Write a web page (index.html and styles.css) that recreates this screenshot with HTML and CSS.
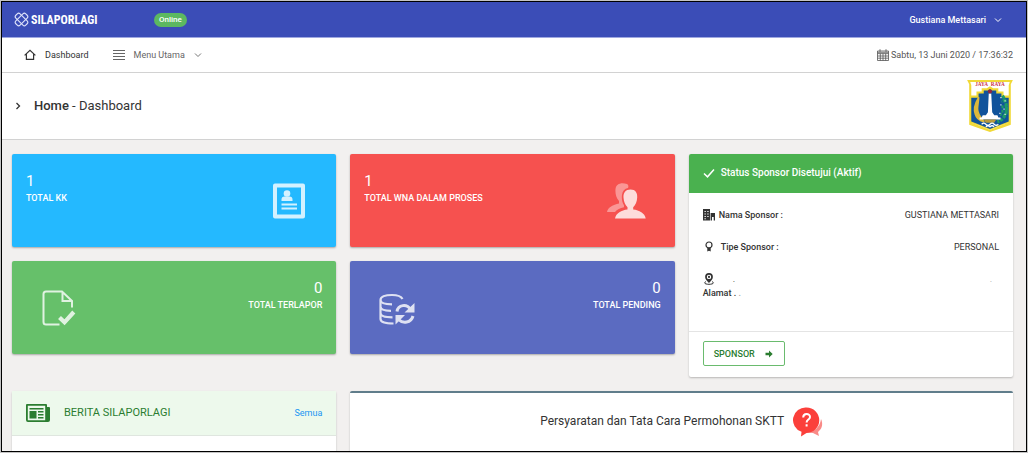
FILE: index.html
```html
<!DOCTYPE html>
<html lang="id">
<head>
<meta charset="utf-8">
<meta name="viewport" content="width=device-width, initial-scale=1">
<title>SILAPORLAGI - Dashboard</title>
<link rel="stylesheet" href="styles.css">
</head>
<body>
<div class="app">
  <header class="topbar">
    <a class="brand" href="#">
      <svg class="brand-mark" viewBox="0 0 30 30" aria-hidden="true">
        <g fill="none" stroke="currentColor" stroke-width="2.2">
          <rect x="1" y="9" width="28" height="12" rx="4" transform="rotate(45 15 15)"/>
          <rect x="1" y="9" width="28" height="12" rx="4" transform="rotate(-45 15 15)"/>
        </g>
      </svg>
      <span class="brand-name">SILAPORLAGI</span>
    </a>
    <span class="badge">Online</span>
    <button class="user" type="button">Gustiana Mettasari
      <svg class="caret" viewBox="0 0 8 8" aria-hidden="true"><path d="M1 2.5l3 3 3-3" fill="none" stroke="currentColor"/></svg>
    </button>
  </header>

  <nav class="menubar">
    <a class="menu-item active" href="#">
      <svg class="icon-12" viewBox="0 0 12 12" aria-hidden="true"><path d="M.6 6.4L6 1.4l5.4 5M2.4 5.2v5.2h7.2V5.2" fill="none" stroke="currentColor" stroke-width="1.2"/></svg>
      Dashboard
    </a>
    <button class="menu-item" type="button">
      <svg class="icon-12" viewBox="0 0 12 12" aria-hidden="true"><path d="M0 1.5h12M0 4.5h12M0 7.5h12M0 10.5h12" stroke="currentColor" stroke-width="1.2"/></svg>
      Menu Utama
      <svg class="caret" viewBox="0 0 8 8" aria-hidden="true"><path d="M1 2.5l3 3 3-3" fill="none" stroke="currentColor" stroke-width=".9"/></svg>
    </button>
    <time class="clock" datetime="2020-06-13T17:36:32">
      <svg class="icon-12" viewBox="0 0 12 12" aria-hidden="true"><path d="M.5 2h11v9.5H.5zM.5 4.600h11M.5 7h11M.5 9.200h11M3.300 4.600v7M6 4.600v7M8.700 4.600v7M3 .2v2.600M9 .2v2.600M.5 3.300h11" fill="none" stroke="currentColor" stroke-width=".8"/></svg>
      Sabtu, 13 Juni 2020 / 17:36:32
    </time>
  </nav>

  <div class="page-header">
    <svg class="caret dark" viewBox="0 0 8 8" aria-hidden="true"><path d="M2.5 1l3 3-3 3" fill="none" stroke="currentColor" stroke-width="1.3"/></svg>
    <h1 class="page-title"><strong>Home</strong> - Dashboard</h1>
    <svg class="crest" viewBox="1 1 44 50" role="img" aria-label="Jaya Raya">
      <path d="M1 1h44l-2 4v39l-8 3-12 4-12-4-8-3V5z" fill="#f1d936"/>
      <path d="M4 3h38l-1 3v36l-8 3-10 4-10-4-8-3V6z" fill="#fff"/>
      <path d="M4 16h6v-4h5V9h5l3-2 3 2h5v3h5v4h6v26l-9 3-10 4-10-4-9-3z" fill="#f1d936"/>
      <path d="M5 18h7v-4h5v-3h4l2-1 2 1h4v3h5v4h7v23l-8 3-10 4-10-4-8-3z" fill="#10539b"/>
      <text x="23" y="7" text-anchor="middle" class="crest-text">JAYA&#160;&#160;RAYA</text>
      <path d="M12 18c-3 5-5 11-3 16 1 4 4 6 8 7-3-4-6-7-6-12 0-4 1-7 1-11z" fill="#dcb83a" stroke="#dcb83a" stroke-width="1.600" stroke-linejoin="round"/>
      <path d="M35 16c4 6 5 13 3 18-2 4-4 6-8 7M38 20l-4 2M40 26l-6 1M40 31h-6M38 36l-5-2" fill="none" stroke="#1e9a68" stroke-width="3" stroke-dasharray="3 1"/>
      <path d="M33 18h1M37 21h1M33 25h1M36 29h1M32 33h1M37 34h1" stroke="#fff" stroke-width="1.200"/>
      <path d="M21.800 14h2.400l.9 18 2 3h3l1 2h2v2H13v-2h2l1-2h3l2-3z" fill="#fff"/>
      <circle cx="23" cy="12" r="2" fill="#8e2740"/>
      <path d="M17 39h12l-2 3h-8z" fill="#b79a3c"/>
      <path d="M15 43.500q2-2 4 0t4 0 4 0 4 0M19 46q2-2 4 0 2-2 4 0" fill="none" stroke="#fff" stroke-width="1.200"/>
    </svg>
  </div>

  <main class="content">
    <div class="grid">
      <section class="stat blue">
        <div><div class="stat-value">1</div><div class="stat-label">TOTAL KK</div></div>
        <svg class="stat-icon" viewBox="0 0 36 36" aria-hidden="true"><g fill="currentColor"><path fill-rule="evenodd" d="M5 .5h27q2 0 2 2v31q0 2-2 2H4q-2 0-2-2v-31q0-2 2-2zM6 4.500v27h24v-27z"/><circle cx="16" cy="10.500" r="3.300"/><path d="M10.500 18v-1.500q0-3 3-3h5q3 0 3 3V18zM10.500 20.500H26v2H10.500zM10.500 24.500H26v2H10.500z"/></g></svg>
      </section>
      <section class="stat red">
        <div><div class="stat-value">1</div><div class="stat-label">TOTAL WNA DALAM PROSES</div></div>
        <svg class="stat-icon wide" viewBox="0 0 40 36" aria-hidden="true"><path opacity=".5" fill="currentColor" d="M21 1c-6-2-11 0-11.500 5-.4 4 .5 9 3.500 12v2.500c-6 1.500-11 3.500-12 8.500h8c2-2.500 5-3.700 9-4.700v-2c-2-3-2.500-7-2-10.500.5-4 2.500-6 6-6.800.7-1.500.5-3-1-4z"/><path fill="currentColor" d="M24.500 6.500c5 0 7 3.500 6.700 8-.3 4-1.500 7.500-4 9.700v2.300c6 .6 11.500 3.500 12.500 9H9c1-5.500 6.500-8.400 12.500-9v-2.300c-2.500-2.200-3.700-5.700-4-9.700-.3-4.500 2-8 7-8z"/></svg>
      </section>
      <section class="card sponsor">
        <h2 class="sponsor-head">
          <svg class="icon-12" viewBox="0 0 12 12" aria-hidden="true"><path d="M1 6.500l3.500 3.300L11 2.500" fill="none" stroke="currentColor" stroke-width="1.500"/></svg>
          Status Sponsor Disetujui (Aktif)
        </h2>
        <dl class="details">
          <div class="detail">
            <dt><svg class="icon-12" viewBox="0 0 12 12" aria-hidden="true"><path fill="currentColor" fill-rule="evenodd" d="M0 0h7v11.500H0zM1.500 2v1h1.300V2zM4.300 2v1h1.300V2zM1.500 4.500v1h1.300v-1zM4.300 4.500v1h1.300v-1zM1.500 7v1h1.300V7zM4.300 7v1h1.300V7zM1.500 9.300v1h1.300v-1zM7.600 4H12v7.500h-1.300V8H9v3.500H7.600z"/></svg> Nama Sponsor :</dt>
            <dd>GUSTIANA METTASARI</dd>
          </div>
          <div class="detail">
            <dt><svg class="icon-12" viewBox="0 0 12 12" aria-hidden="true"><circle cx="6" cy="4" r="3" fill="none" stroke="currentColor" stroke-width="1.200"/><path fill="currentColor" d="M4.300 6.500h3.400v4L6 9.800l-1.700.7z"/></svg> <span class="indent">Tipe Sponsor :</span></dt>
            <dd>PERSONAL</dd>
          </div>
          <div class="detail address">
            <dt><span class="pin-row"><svg class="icon-12" viewBox="0 0 12 12" aria-hidden="true"><path fill="currentColor" fill-rule="evenodd" d="M6 0a3.900 3.900 0 0 1 3.900 3.900C9.900 6.500 7.500 8 6 10 4.500 8 2.100 6.500 2.100 3.900A3.900 3.900 0 0 1 6 0zm0 1.700a2.200 2.200 0 1 0 0 4.400 2.200 2.200 0 0 0 0-4.400z"/><circle cx="6" cy="3.900" r="1.100" fill="currentColor"/><path d="M3 8.600c-3 1.300-.8 2.700 3 2.700s6-1.400 3-2.700" fill="none" stroke="currentColor"/></svg> <span class="stop">.</span></span>Alamat . <span class="faint">.</span></dt>
            <dd class="faint">.</dd>
          </div>
        </dl>
        <footer class="sponsor-foot">
          <button class="btn" type="button">SPONSOR
            <svg class="arrow" viewBox="0 0 8 8" aria-hidden="true"><path fill="currentColor" d="M.5 2.700H4V.6L7.700 4 4 7.400V5.300H.5z"/></svg>
          </button>
        </footer>
      </section>
      <section class="stat green reverse">
        <svg class="stat-icon" viewBox="0 0 36 36" aria-hidden="true"><path d="M18.500 34.500H5q-2.500 0-2.500-2.500V4Q2.500 1.500 5 1.500h16L31 11v6.500M21.500 2v9H31" fill="none" stroke="currentColor" stroke-width="2"/><path d="M18.500 27.500l5 4.800 9.300-10.300" fill="none" stroke="currentColor" stroke-width="4.200"/></svg>
        <div><div class="stat-value">0</div><div class="stat-label">TOTAL TERLAPOR</div></div>
      </section>
      <section class="stat indigo reverse">
        <svg class="stat-icon" viewBox="0 0 36 36" aria-hidden="true"><g fill="none" stroke="currentColor" stroke-width="2.200"><path d="M23.500 9C22 6 18 5 13 5 6 5 1.500 7 1.500 10v19c0 3 5 4.500 13 4.500M1.500 10c0 3 5 4.300 11.500 4.300M1.500 16.500c0 3 5 4.300 10.500 4.300M1.500 23c0 3 5 4.300 12 4.300"/><path d="M18 21.500c1-7 10-8 13.500-2M34 26c-2 7-10 8-14.500 3.500" stroke-width="3"/></g><path fill="currentColor" d="M35.500 13v9.500h-10zM16.500 34.500V25H26z"/></svg>
        <div><div class="stat-value">0</div><div class="stat-label">TOTAL PENDING</div></div>
      </section>
    </div>

    <div class="grid lower">
      <section class="card news">
        <header class="news-head">
          <svg class="news-icon" viewBox="0 0 24 18" aria-hidden="true"><path fill="currentColor" fill-rule="evenodd" d="M1 0h19q1 0 1 1v2h2q1 0 1 1v12q0 2-2 2H2q-2 0-2-2V1q0-1 1-1zm.8 1.800v14.400h17.400V1.800z"/><path fill="currentColor" d="M3.500 4h14v1.500h-14zM3.500 7h7v7.500h-7zM12 7h5.500v1.400H12zM12 10h5.500v1.400H12zM12 13h5.500v1.400H12z"/></svg>
          <h2 class="news-title">BERITA SILAPORLAGI</h2>
          <a class="news-link" href="#">Semua</a>
        </header>
      </section>
      <section class="card guide">
        <h2 class="guide-title">Persyaratan dan Tata Cara Permohonan SKTT</h2>
        <svg class="guide-icon" viewBox="0 0 30 30" aria-hidden="true"><path fill="#f98a87" d="M28 12c2 4 1.500 9-2 12l-1 1 1 4-6-3-5-.5c7-1 12-6 13-13.500z"/><path fill="#fb403b" d="M13.500.5a12.500 12.500 0 1 1 0 25.500L8 29.500l.5-4.700A12.500 12.500 0 0 1 13.500.5z"/><path d="M10.200 10.500c0-4.500 6.800-4.500 6.800-.6 0 2.800-3.400 2.600-3.400 5.700M13.600 17.300v2.300" fill="none" stroke="#fff" stroke-width="2"/></svg>
      </section>
    </div>
  </main>
</div>
</body>
</html>
```
FILE: styles.css
```css
* { box-sizing: border-box; }

body {
  margin: 0;
  background: #c4c4c4;
  color: #333;
  font: 9px/14px Roboto, "Liberation Sans", sans-serif;
}

h1, h2, dl, dd { margin: 0; font-weight: 400; }
a { color: inherit; text-decoration: none; }
button { font: inherit; color: inherit; background: none; border: 0; padding: 0; cursor: pointer; }
svg { display: block; flex: none; }

.app {
  display: flex;
  flex-direction: column;
  height: 100vh;
  overflow: hidden;
  border: 1px solid #c4c4c4;
  outline: 1px solid #000;
  outline-offset: -2px;
  padding: 1px;
  background: #f2f0ef;
}

.icon-12 { width: 12px; height: 12px; }
.caret { width: 8px; height: 8px; }
.dark { color: #333; }

.topbar {
  display: flex;
  align-items: center;
  height: 36px;
  flex: none;
  padding: 0 24px 0 12px;
  background: #3b4db7;
  border-bottom: 1px solid #9fa8e0;
  color: #fff;
}
.brand { display: flex; align-items: center; gap: 2px; width: 140px; }
.brand-mark { width: 15px; height: 15px; color: #dfe3fa; }
.brand-name { font: 700 12px/16px "Roboto Condensed", "Liberation Sans Narrow", Roboto, sans-serif; }
.badge {
  padding: 0 5px;
  border-radius: 7px;
  background: #5cb860;
  font-size: 8px;
  font-weight: 500;
}
.user { display: flex; align-items: center; gap: 8px; margin-left: auto; font-weight: 500; }

.menubar {
  display: flex;
  align-items: center;
  gap: 24px;
  height: 35px;
  flex: none;
  padding: 0 13px 0 22px;
  background: #fff;
  border-bottom: 1px solid #d2d2d2;
}
.menu-item { display: flex; align-items: center; gap: 9px; color: #666; }
.active { color: #333; }
.clock { display: flex; align-items: center; gap: 2px; margin-left: auto; color: #555; }

.page-header {
  display: flex;
  align-items: center;
  gap: 12px;
  height: 67px;
  flex: none;
  padding: 0 13px 0 12px;
  background: #fff;
  border-bottom: 1px solid #d2d2d2;
}
.page-title { font-size: 13px; line-height: 20px; }
.page-title strong { font-weight: 500; }
.crest { width: 46px; height: 52px; margin-left: auto; }
.crest-text { font: 700 5px "Liberation Serif", serif; fill: #c8324a; }

.content { display: flex; flex: 1; flex-direction: column; gap: 14px; padding: 14px 13px 0 10px; }
.grid {
  display: grid;
  grid-template-columns: repeat(3, minmax(0, 1fr));
  grid-template-rows: auto 1fr;
  align-items: start;
  gap: 14px;
}
.lower { flex: 1; grid-template-rows: 1fr; align-items: stretch; }

.stat {
  display: flex;
  justify-content: space-between;
  min-height: 93px;
  padding: 17px 14px;
  border-radius: 2px;
  box-shadow: 0 1px 2px #0000004d;
  color: #fff;
}
.reverse { text-align: right; }
.blue { background: #24b9ff; }
.red { background: #f6514f; }
.green { background: #66c06a; }
.indigo { background: #5b6bc1; }
.stat-value { font-size: 15px; line-height: 20px; }
.stat-label { line-height: 15px; font-weight: 500; }
.stat-icon { align-self: center; width: 36px; height: 36px; margin: 0 15px; opacity: .8; }
.wide { width: 40px; }

.card { background: #fff; border-radius: 2px; box-shadow: 0 1px 2px #0000003d; }

.sponsor { grid-row: span 2; display: flex; flex-direction: column; overflow: hidden; min-height: 223px; }
.sponsor-head {
  display: flex;
  align-items: center;
  gap: 6px;
  padding: 9px 14px 10px;
  background: #4ab14f;
  color: #fff;
  font-size: 10px;
  line-height: 20px;
  font-weight: 500;
}
.details { display: flex; flex: 1; flex-direction: column; gap: 18px; padding: 15px 14px 0; }
.detail { display: flex; justify-content: space-between; }
.detail dt { display: flex; align-items: center; gap: 4px; font-weight: 500; }
.indent { padding-left: 2px; }
.detail.address dt { display: block; }
.pin-row { display: flex; align-items: center; gap: 18px; }
.stop { font-weight: 400; }
.faint { color: #aaa; }
.detail .faint { padding-right: 7px; }
.sponsor-foot { padding: 9px 14px 11px; border-top: 1px solid #e4e4e4; }
.btn {
  display: flex;
  align-items: center;
  gap: 10px;
  height: 25px;
  padding: 0 11px 0 10px;
  border: 1px solid #6abb6e;
  border-radius: 2px;
  color: #2b7d30;
  font-weight: 500;
}
.arrow { width: 8px; height: 8px; }

.news, .guide { border-radius: 2px 2px 0 0; }
.news-head {
  display: flex;
  align-items: center;
  gap: 14px;
  height: 45px;
  padding: 0 14px;
  background: #edf9ec;
  border-bottom: 1px solid #dfe6df;
  color: #2b7d30;
}
.news-icon { width: 24px; height: 18px; }
.news-title { font-size: 11px; }
.news-link { margin-left: auto; color: #2196f3; }
.guide {
  grid-column: span 2;
  display: flex;
  align-items: flex-start;
  justify-content: center;
  gap: 9px;
  padding-top: 14px;
  border-top: 2px solid #607d8b;
}
.guide-title { font-size: 12px; line-height: 28px; }
.guide-icon { width: 30px; height: 30px; }
```
